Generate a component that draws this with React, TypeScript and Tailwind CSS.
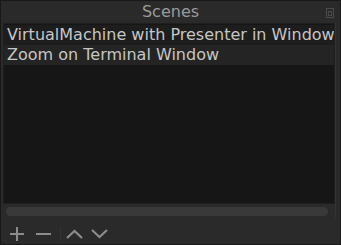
const Plus = () => (
  <svg width="16" height="16" viewBox="0 0 16 16" className="block">
    <path d="M8 1v14M1 8h14" stroke="#8c8c8c" strokeWidth="2" fill="none" />
  </svg>
);

const Minus = () => (
  <svg width="16" height="16" viewBox="0 0 16 16" className="block">
    <path d="M1 8h15" stroke="#8c8c8c" strokeWidth="2" fill="none" />
  </svg>
);

const Chevron = ({ up }: { up?: boolean }) => (
  <svg width="17" height="16" viewBox="0 0 17 16" className="block">
    <path
      d={up ? "M1 12l7.5-7 7.5 7" : "M1 4l7.5 7 7.5-7"}
      stroke="#8c8c8c"
      strokeWidth="2.2"
      fill="none"
    />
  </svg>
);

const FloatIcon = () => (
  <svg width="8" height="10" viewBox="0 0 8 10" className="block">
    <rect x="0.5" y="0.5" width="7" height="9" fill="none" stroke="#4a4a4a" />
    <rect x="2.5" y="3.5" width="3" height="4" fill="none" stroke="#4a4a4a" />
  </svg>
);

const scenes = ["VirtualMachine with Presenter in Window", "Zoom on Terminal Window"];

export default function App() {
  return (
    <div
      className="w-[341px] h-[245px] bg-[#2a2a2a] border border-[#181818] flex flex-col overflow-hidden"
      style={{ fontFamily: '"DejaVu Sans", sans-serif' }}
    >
      <div className="h-[22px] relative flex items-center justify-center">
        <span className="text-[16px] text-[#9a9a9a] leading-none">Scenes</span>
        <div className="absolute right-[6px] top-[7px]">
          <FloatIcon />
        </div>
      </div>
      <div className="flex flex-1 pl-[2px]">
        <div className="flex-1 flex flex-col min-w-0">
          <div className="flex-1 bg-[#161616] border border-[#1f1f1f] pt-px overflow-hidden">
            {scenes.map((s, i) => (
              <div
                key={s}
                className={`h-[20px] flex items-center pl-[3px] text-[16px] text-[#c6c6c6] whitespace-nowrap ${
                  i === 0 ? "bg-[#1d1d1d]" : "bg-[#242424]"
                }`}
              >
                {s}
              </div>
            ))}
          </div>
          <div className="h-[14px] flex items-center px-[3px]">
            <div className="h-[9px] w-[322px] rounded-full bg-[#393939]" />
          </div>
        </div>
        <div className="w-[5px] border-l border-[#333333]" />
      </div>
      <div className="h-[26px] flex items-center pt-[5px] pl-[8px]">
        <Plus />
        <div className="ml-[10px]">
          <Minus />
        </div>
        <div className="w-px h-[14px] bg-[#333333] ml-[9px]" />
        <div className="ml-[5px]">
          <Chevron up />
        </div>
        <div className="ml-[8px]">
          <Chevron />
        </div>
      </div>
    </div>
  );
}
